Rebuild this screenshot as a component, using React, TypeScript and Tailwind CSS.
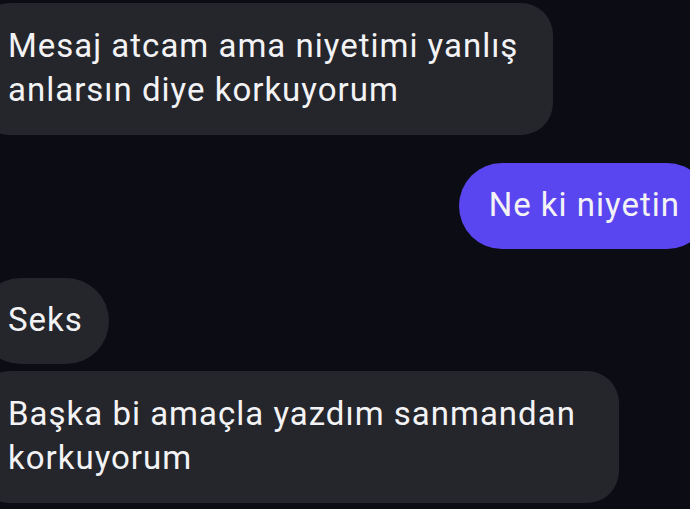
import React from "react";

const font = { fontFamily: "Roboto, 'Noto Sans', sans-serif" };

export default function App() {
  return (
    <div
      className="w-[690px] h-[509px] overflow-hidden bg-[#0c0d14] text-[#f3f3f5] text-[33px] leading-[44px] tracking-[1px] flex flex-col items-start pt-[3px]"
      style={font}
    >
      <div className="-ml-[22px] pl-[30px] pr-[25px] pt-[21px] pb-[23px] w-[575px] bg-[#25262c] rounded-[32px]">
        Mesaj atcam ama niyetimi yanlış anlarsın diye korkuyorum
      </div>
      <div className="self-end mt-[28px] -mr-[20px] pl-[30px] pr-[30px] pt-[20px] pb-[22px] bg-[#5a46f0] rounded-[44px] whitespace-nowrap">
        Ne ki niyetin
      </div>
      <div className="mt-[29px] -ml-[22px] pl-[30px] pr-[26px] pt-[20px] pb-[22px] bg-[#25262c] rounded-[44px]">
        Seks
      </div>
      <div className="mt-[7px] -ml-[22px] pl-[30px] pr-[25px] pt-[21px] pb-[23px] w-[641px] bg-[#25262c] rounded-[32px]">
        Başka bi amaçla yazdım sanmandan korkuyorum
      </div>
    </div>
  );
}
